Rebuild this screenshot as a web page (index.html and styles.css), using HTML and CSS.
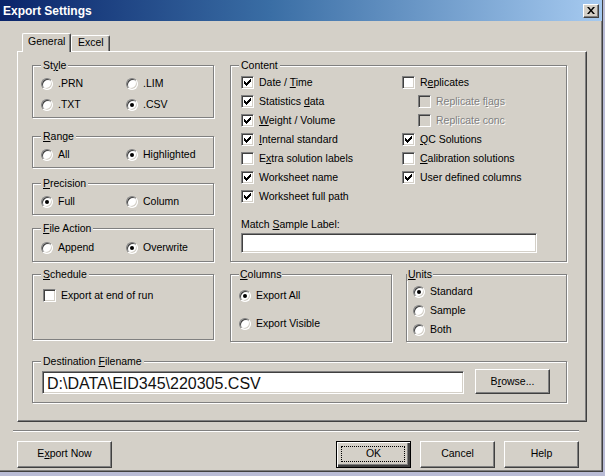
FILE: index.html
```html
<!DOCTYPE html>
<html>
<head>
<meta charset="utf-8">
<title>Export Settings</title>
<link rel="stylesheet" href="styles.css">
</head>
<body>
<div class="window">
  <div class="titlebar">
    <span class="title">Export Settings</span>
    <span class="close"><svg width="8" height="7" viewBox="0 0 8 7"><path d="M0 0h2l2 2.4 2-2.4h2l-3 3.5 3 3.5h-2l-2-2.4-2 2.4h-2l3-3.5z" fill="#000"/></svg></span>
  </div>
  <div class="client">
    <div class="tabs">
      <div class="tab active">General</div>
      <div class="tab">Excel</div>
    </div>
    <div class="panel">
      <div class="col-left">
        <div class="group g-style">
          <span class="legend">St<u>y</u>le</span>
          <div class="pair">
            <div class="opt"><span class="radio"></span><span>.PRN</span></div>
            <div class="opt"><span class="radio"></span><span>.LIM</span></div>
            <div class="opt"><span class="radio"></span><span>.TXT</span></div>
            <div class="opt"><span class="radio on"></span><span>.CSV</span></div>
          </div>
        </div>
        <div class="group g-range">
          <span class="legend"><u>R</u>ange</span>
          <div class="pair">
            <div class="opt"><span class="radio"></span><span>All</span></div>
            <div class="opt"><span class="radio on"></span><span>Highlighted</span></div>
          </div>
        </div>
        <div class="group g-prec">
          <span class="legend"><u>P</u>recision</span>
          <div class="pair">
            <div class="opt"><span class="radio on"></span><span>Full</span></div>
            <div class="opt"><span class="radio"></span><span>Column</span></div>
          </div>
        </div>
        <div class="group g-file">
          <span class="legend"><u>F</u>ile Action</span>
          <div class="pair">
            <div class="opt"><span class="radio"></span><span>Append</span></div>
            <div class="opt"><span class="radio on"></span><span>Overwrite</span></div>
          </div>
        </div>
        <div class="group g-sched">
          <span class="legend"><u>S</u>chedule</span>
          <div class="opt"><span class="check"></span><span>Export at end of run</span></div>
        </div>
      </div>

      <div class="col-right">
        <div class="group g-content">
          <span class="legend">Content</span>
          <div class="content-cols">
            <div class="list">
              <div class="opt"><span class="check on"><svg width="7" height="7" viewBox="0 0 7 7"><path d="M0 2L2 4L6 0H7V2L2 7L0 5Z"/></svg></span><span>Date / <u>T</u>ime</span></div>
              <div class="opt"><span class="check on"><svg width="7" height="7" viewBox="0 0 7 7"><path d="M0 2L2 4L6 0H7V2L2 7L0 5Z"/></svg></span><span>Statistics <u>d</u>ata</span></div>
              <div class="opt"><span class="check on"><svg width="7" height="7" viewBox="0 0 7 7"><path d="M0 2L2 4L6 0H7V2L2 7L0 5Z"/></svg></span><span><u>W</u>eight / Volume</span></div>
              <div class="opt"><span class="check on"><svg width="7" height="7" viewBox="0 0 7 7"><path d="M0 2L2 4L6 0H7V2L2 7L0 5Z"/></svg></span><span><u>I</u>nternal standard</span></div>
              <div class="opt"><span class="check"></span><span>E<u>x</u>tra solution labels</span></div>
              <div class="opt"><span class="check on"><svg width="7" height="7" viewBox="0 0 7 7"><path d="M0 2L2 4L6 0H7V2L2 7L0 5Z"/></svg></span><span>Worksheet name</span></div>
              <div class="opt"><span class="check on"><svg width="7" height="7" viewBox="0 0 7 7"><path d="M0 2L2 4L6 0H7V2L2 7L0 5Z"/></svg></span><span>Worksheet full path</span></div>
            </div>
            <div class="list">
              <div class="opt"><span class="check"></span><span>R<u>e</u>plicates</span></div>
              <div class="opt sub disabled"><span class="check"></span><span>Replicate f<u>l</u>ags</span></div>
              <div class="opt sub disabled"><span class="check"></span><span>Replicate conc</span></div>
              <div class="opt"><span class="check on"><svg width="7" height="7" viewBox="0 0 7 7"><path d="M0 2L2 4L6 0H7V2L2 7L0 5Z"/></svg></span><span><u>Q</u>C Solutions</span></div>
              <div class="opt"><span class="check"></span><span><u>C</u>alibration solutions</span></div>
              <div class="opt"><span class="check on"><svg width="7" height="7" viewBox="0 0 7 7"><path d="M0 2L2 4L6 0H7V2L2 7L0 5Z"/></svg></span><span>User defined columns</span></div>
            </div>
          </div>
          <div class="field-label">Match <u>S</u>ample Label:</div>
          <div class="edit match"></div>
        </div>
        <div class="bottom-pair">
          <div class="group g-columns">
            <span class="legend tight"><u>C</u>olumns</span>
            <div class="stack wide">
              <div class="opt"><span class="radio on"></span><span>Export All</span></div>
              <div class="opt"><span class="radio"></span><span>Export Visible</span></div>
            </div>
          </div>
          <div class="group g-units">
            <span class="legend flush"><u>U</u>nits</span>
            <div class="stack">
              <div class="opt"><span class="radio on"></span><span>Standard</span></div>
              <div class="opt"><span class="radio"></span><span>Sample</span></div>
              <div class="opt"><span class="radio"></span><span>Both</span></div>
            </div>
          </div>
        </div>
      </div>

      <div class="group g-dest">
        <span class="legend">Destination <u>F</u>ilename</span>
        <div class="dest-row">
          <div class="edit path">D:\DATA\EID345\220305.CSV</div>
          <div class="btn browse"><span>B<u>r</u>owse...</span></div>
        </div>
      </div>
    </div>
    <div class="separator"></div>
    <div class="button-row">
      <div class="btn export"><span>E<u>x</u>port Now</span></div>
      <div class="btn default"><span>OK</span></div>
      <div class="btn"><span>Cancel</span></div>
      <div class="btn"><span>Help</span></div>
    </div>
  </div>
</div>
</body>
</html>
```

FILE: styles.css
```css
* { box-sizing: border-box; }

html, body { margin: 0; }

body {
  width: 605px;
  height: 476px;
  overflow: hidden;
  background: #b9bcd6;
  font-family: "Liberation Sans", Arial, sans-serif;
  font-size: 10.5px;
  line-height: 13px;
  color: #000;
}

u { text-decoration: underline; text-underline-offset: 1px; }

.window {
  width: 603px;
  height: 472px;
  background: #d4d0c8;
  border-right: 1px solid #404040;
  border-bottom: 1px solid #404040;
  box-shadow: inset -1px -1px #808080;
  display: flex;
  flex-direction: column;
}

/* ---------- title bar ---------- */
.titlebar {
  height: 21px;
  flex: none;
  display: flex;
  align-items: center;
  padding-left: 3px;
  padding-right: 3px;
  background: linear-gradient(to right, #0a246a 0%, #3a6ea5 45%, #a6caf0 100%);
}

.title {
  color: #fff;
  font-weight: bold;
  font-size: 12px;
  padding-top: 2px;
}

.close {
  margin-left: auto;
  width: 16px;
  height: 14px;
  display: flex;
  align-items: center;
  justify-content: center;
  background: #d4d0c8;
  border: 1px solid;
  border-color: #fff #404040 #404040 #fff;
  box-shadow: inset -1px -1px #808080;
  padding-bottom: 1px;
}

/* ---------- client area ---------- */
.client {
  padding: 12px 0 0 13px;
  display: flex;
  flex-direction: column;
}

.tabs {
  display: flex;
  align-items: flex-end;
  height: 18px;
  margin-left: 9px;
}

.tab {
  height: 16px;
  padding: 0 5px 0 6px;
  border: 1px solid;
  border-bottom: none;
  border-color: #fff #404040 #404040 #fff;
  border-radius: 2px 2px 0 0;
  box-shadow: inset -1px 0 #808080;
  background: #d4d0c8;
}

.tab.active {
  position: relative;
  z-index: 1;
  height: 19px;
  margin-bottom: -1px;
  padding: 1px 6px 0 5px;
  width: 49px;
}

.panel {
  width: 570px;
  height: 371px;
  margin-left: 4px;
  border: 1px solid;
  border-color: #fff #404040 #404040 #fff;
  box-shadow: inset -1px -1px #808080;
  padding: 13px 0 0 14px;
  display: grid;
  grid-template-columns: 182px 337px;
  column-gap: 16px;
  align-content: start;
}

.col-left, .col-right {
  display: flex;
  flex-direction: column;
}

/* ---------- group boxes ---------- */
.group {
  position: relative;
  border: 1px solid #808080;
  box-shadow: inset 1px 1px #fff, 1px 1px #fff;
}

.legend {
  position: absolute;
  top: -7px;
  left: 8px;
  padding: 0 2px;
  background: #d4d0c8;
  white-space: nowrap;
}

.legend.tight { left: 8px; padding: 0 1px; }
.legend.flush { left: 0; padding: 0 1px; }

.g-style, .g-range, .g-prec { padding: 11px 0 6px 8px; }
.g-range { margin-top: 18px; }
.g-prec { margin-top: 15px; }
.g-file { margin-top: 13px; padding: 12px 0 7px 8px; }
.g-sched { margin-top: 12px; height: 66px; padding: 14px 0 0 10px; }

.pair {
  display: grid;
  grid-template-columns: 85px auto;
  row-gap: 8px;
}

.g-content {
  height: 197px;
  padding: 10px 0 0 10px;
}

.content-cols {
  display: grid;
  grid-template-columns: 161px auto;
}

.list {
  display: flex;
  flex-direction: column;
  gap: 6px;
}

.field-label { margin-top: 15px; }

.bottom-pair {
  margin-top: 12px;
  display: grid;
  grid-template-columns: 162px 161px;
  column-gap: 14px;
}

.g-columns { height: 68px; padding: 14px 0 0 8px; }
.g-units { height: 68px; padding: 10px 0 0 6px; }

.stack {
  display: flex;
  flex-direction: column;
  gap: 6px;
}

.stack.wide { gap: 15px; }

.g-dest {
  grid-column: 1 / -1;
  margin-top: 19px;
  padding: 7px 0 8px 9px;
}

.dest-row {
  display: flex;
  align-items: flex-end;
  gap: 11px;
}

/* ---------- controls ---------- */
.opt {
  display: flex;
  align-items: center;
  gap: 5px;
  height: 13px;
  white-space: nowrap;
}

.opt.sub { margin-left: 16px; }

.opt.disabled {
  color: #808080;
  text-shadow: 1px 1px #fff;
}

.radio {
  flex: none;
  width: 12px;
  height: 12px;
  border-radius: 50%;
  background: #fff;
  border: 1px solid;
  border-color: #808080 #fff #fff #808080;
  box-shadow: inset 1px 1px #404040, inset -1px -1px #d4d0c8;
  display: flex;
  align-items: center;
  justify-content: center;
}

.radio.on::after {
  content: "";
  width: 4px;
  height: 4px;
  border-radius: 50%;
  background: #000;
}

.check {
  flex: none;
  width: 13px;
  height: 13px;
  background: #fff;
  border: 1px solid;
  border-color: #808080 #fff #fff #808080;
  box-shadow: inset 1px 1px #404040, inset -1px -1px #d4d0c8;
  display: flex;
  align-items: center;
  justify-content: center;
}

.check svg { display: block; fill: #000; shape-rendering: crispEdges; }

.disabled .check { background: #d4d0c8; }

.edit {
  background: #fff;
  border: 1px solid;
  border-color: #808080 #fff #fff #808080;
  box-shadow: inset 1px 1px #404040, inset -1px -1px #d4d0c8;
}

.edit.match {
  margin-top: 2px;
  width: 296px;
  height: 20px;
}

.edit.path {
  width: 422px;
  height: 23px;
  padding: 2px 0 0 4px;
  font-size: 16px;
  line-height: 19px;
  color: #111;
}

.btn {
  position: relative;
  display: flex;
  align-items: center;
  justify-content: center;
  width: 75px;
  height: 27px;
  padding-bottom: 2px;
  background: #d4d0c8;
  border: 1px solid;
  border-color: #fff #404040 #404040 #fff;
  box-shadow: inset -1px -1px #808080;
}

.btn.browse { height: 25px; padding-bottom: 1px; }

.btn.export { width: 95px; margin-right: auto; }

.btn.default {
  border: 1px solid #000;
  box-shadow: inset 1px 1px #fff, inset -2px -2px #404040, inset -3px -3px #808080;
}

.btn.default::after {
  content: "";
  position: absolute;
  left: 4px;
  top: 4px;
  right: 5px;
  bottom: 5px;
  border: 1px dotted #000;
}

.separator {
  margin-top: 8px;
  width: 566px;
  height: 2px;
  border-top: 1px solid #808080;
  border-bottom: 1px solid #fff;
}

.button-row {
  margin-top: 9px;
  margin-left: 4px;
  width: 562px;
  display: flex;
  gap: 9px;
}
```
